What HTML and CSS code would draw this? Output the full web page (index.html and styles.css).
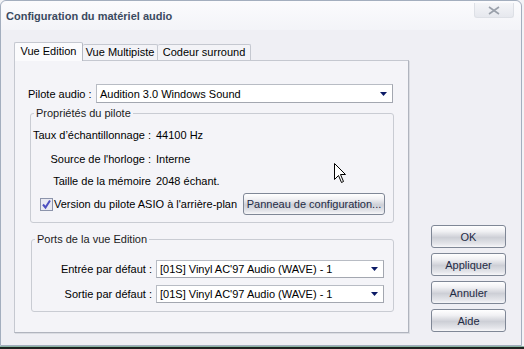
FILE: index.html
```html
<!DOCTYPE html>
<html lang="fr">
  <head>
    <meta charset="UTF-8" />
    <meta name="viewport" content="width=device-width, initial-scale=1.0" />
    <title>Configuration du matériel audio</title>
    <link rel="stylesheet" href="styles.css">
  </head>
  <body>
    <div class="window">
      <div class="titlebar">
        <span class="title">Configuration du matériel audio</span>
        <span class="close">
          <svg width="12" height="9" viewBox="0 0 12 9">
            <path d="M1 1 L11 8 M11 1 L1 8" stroke="#9aa0aa" stroke-width="1.6" fill="none" />
          </svg>
        </span>
      </div>

      <div class="content">
        <div class="tabs-area">
          <div class="tabs">
            <div class="tab active">Vue Edition</div>
            <div class="tab t-multi">Vue Multipiste</div>
            <div class="tab t-surround">Codeur surround</div>
          </div>

          <div class="panel">
            <div class="driver-row">
              <span class="driver-label">Pilote audio :</span>
              <div class="combo combo-driver">
                <span>Audition 3.0 Windows Sound</span>
                <svg class="arrow" width="7" height="4" viewBox="0 0 7 4"><path d="M0 0 H7 L3.5 4 Z" fill="#0b1a66" /></svg>
              </div>
            </div>

            <!-- Propriétés du pilote -->
            <fieldset class="group group-props">
              <legend>Propriétés du pilote</legend>
              <div class="props-grid">
                <span class="key r1">Taux d’échantillonnage :</span><span class="r1">44100 Hz</span>
                <span class="key r2">Source de l'horloge :</span><span class="r2">Interne</span>
                <span class="key r3">Taille de la mémoire</span><span class="r3">2048 échant.</span>
              </div>
              <div class="asio-row">
                <label class="check">
                  <svg width="13" height="13" viewBox="0 0 13 13">
                    <rect x="0.5" y="0.5" width="12" height="12" fill="#e9e9f2" stroke="#8c94ab" />
                    <path d="M3 6.5 L5.5 9.5 L10 2.5" stroke="#4d4fc0" stroke-width="2" fill="none" />
                  </svg>
                  Version du pilote ASIO à l'arrière-plan
                </label>
                <button class="btn btn-panel">Panneau de configuration...</button>
              </div>
            </fieldset>

            <!-- Ports de la vue Edition -->
            <fieldset class="group group-ports">
              <legend>Ports de la vue Edition</legend>
              <div class="ports-grid">
                <span class="key">Entrée par défaut :</span>
                <div class="combo">
                  <span>[01S] Vinyl AC'97 Audio (WAVE) - 1</span>
                  <svg class="arrow" width="7" height="4" viewBox="0 0 7 4"><path d="M0 0 H7 L3.5 4 Z" fill="#0b1a66" /></svg>
                </div>
                <span class="key">Sortie par défaut :</span>
                <div class="combo">
                  <span>[01S] Vinyl AC'97 Audio (WAVE) - 1</span>
                  <svg class="arrow" width="7" height="4" viewBox="0 0 7 4"><path d="M0 0 H7 L3.5 4 Z" fill="#0b1a66" /></svg>
                </div>
              </div>
            </fieldset>
          </div>
        </div>

        <div class="buttons">
          <button class="btn">OK</button>
          <button class="btn">Appliquer</button>
          <button class="btn">Annuler</button>
          <button class="btn">Aide</button>
        </div>
      </div>

      <svg class="cursor" width="13" height="21" viewBox="0 0 13 21">
        <path d="M0.5 0.5 V16.5 L4.5 12.5 L7.5 19.5 L9.5 18.5 L6.5 11.5 H11.5 Z" fill="#fff" stroke="#000" />
      </svg>
    </div>
    <div class="behind"></div>
  </body>
</html>
```

FILE: styles.css
```css
body {
  margin: 0;
  padding: 0;
  background-color: #f2f3f6;
  font-family: "Liberation Sans", Arial, sans-serif;
  font-size: 11px;
  color: #000;
}

.window {
  position: relative;
  width: 522px;
  height: 346px;
  box-sizing: border-box;
  border: 1px solid #a3aebe;
  border-radius: 6px 6px 0 0;
  background-color: #efeff4;
}

.titlebar {
  height: 29px;
  display: flex;
  align-items: center;
  padding-left: 5px;
  background: linear-gradient(to bottom, #fbfbfd, #f3f4f8);
  border-radius: 6px 6px 0 0;
}

.title {
  font-weight: bold;
  font-size: 11px;
  color: #3b4a60;
  margin-top: 1px;
}

.close {
  margin-left: auto;
  margin-right: 7px;
  align-self: flex-start;
  margin-top: 2px;
  width: 38px;
  height: 14px;
  display: flex;
  align-items: center;
  justify-content: center;
  border: 1px solid #dde0e6;
  border-top: none;
  border-radius: 0 0 3px 3px;
  background: linear-gradient(to bottom, #f4f5f8, #e6e8ee);
}

.content {
  display: flex;
  padding: 12px 0 0 13px;
}

/* onglets */
.tabs {
  display: flex;
  align-items: flex-end;
  height: 18px;
  position: relative;
  z-index: 1;
}

.tab {
  height: 16px;
  box-sizing: border-box;
  line-height: 15px;
  text-align: center;
  background-color: #f3f3f7;
  border: 1px solid #c5c8d0;
  border-bottom: none;
  border-left: none;
  border-radius: 2px 2px 0 0;
}

.tab.active {
  width: 69px;
  height: 19px;
  margin-bottom: -1px;
  line-height: 17px;
  background-color: #fbfbfd;
  border-left: 1px solid #c5c8d0;
  border-right: 1px solid #b4b8c2;
}

.t-multi {
  width: 75px;
}

.t-surround {
  width: 93px;
}

.panel {
  width: 395px;
  height: 273px;
  box-sizing: border-box;
  padding: 23px 14px 0 13px;
  background-color: #f4f4f8;
  border: 1px solid #c5c8d0;
  border-right-color: #b0b4be;
  border-bottom-color: #b0b4be;
  box-shadow: 1px 1px 0 #dadce2;
}

.driver-row {
  display: flex;
  align-items: center;
}

.driver-label {
  width: 68px;
}

.combo {
  height: 19px;
  box-sizing: border-box;
  display: flex;
  align-items: center;
  padding: 0 5px 0 3px;
  background-color: #fff;
  border: 1px solid #b8bcc4;
  border-right-color: #a3a7b0;
  border-bottom-color: #a3a7b0;
}

.combo .arrow {
  margin-left: auto;
}

.combo-driver {
  width: 297px;
}

/* cadres */
.group {
  margin: 4px 0 0 2px;
  padding: 0;
  border: 1px solid #c9ccd3;
  border-radius: 3px;
}

.group legend {
  margin-left: 3px;
  padding: 0 2px;
  line-height: 13px;
  color: #1c1c1c;
}

.props-grid {
  display: grid;
  grid-template-columns: 120px auto;
  column-gap: 5px;
  margin-top: 9px;
}

.key {
  text-align: right;
}

.props-grid span {
  line-height: 13px;
}

.props-grid .r2 {
  margin-top: 11px;
}

.props-grid .r3 {
  margin-top: 9px;
}

.asio-row {
  display: flex;
  align-items: center;
  margin: 5px 0 7px 9px;
}

.check {
  display: flex;
  align-items: center;
  gap: 1px;
}

.btn {
  font-family: "Liberation Sans", Arial, sans-serif;
  font-size: 11px;
  color: #1f2b45;
  height: 23px;
  box-sizing: border-box;
  border: 1px solid #7f8796;
  border-radius: 3px;
  background: linear-gradient(to bottom, #ffffff 0%, #f1f1f4 25%, #cdcfd6 55%, #e4e5ea 85%, #f7f7f9 100%);
  padding: 0;
}

.btn-panel {
  width: 142px;
  height: 22px;
  margin-left: auto;
  margin-right: 8px;
}

.group-ports {
  margin-top: 10px;
  margin-left: 3px;
}

.ports-grid {
  display: grid;
  grid-template-columns: 120px 228px;
  column-gap: 4px;
  row-gap: 7px;
  align-items: center;
  margin: 14px 0 8px 0;
}

.ports-grid .combo {
  height: 18px;
}

/* boutons de droite */
.buttons {
  display: flex;
  flex-direction: column;
  gap: 5px;
  margin: 183px 0 0 22px;
}

.buttons .btn {
  width: 75px;
}

.cursor {
  position: absolute;
  left: 333px;
  top: 162px;
}

.behind {
  height: 3px;
  background-color: #1e2420;
  border-top: 1px solid #8bb4a4;
}
```
